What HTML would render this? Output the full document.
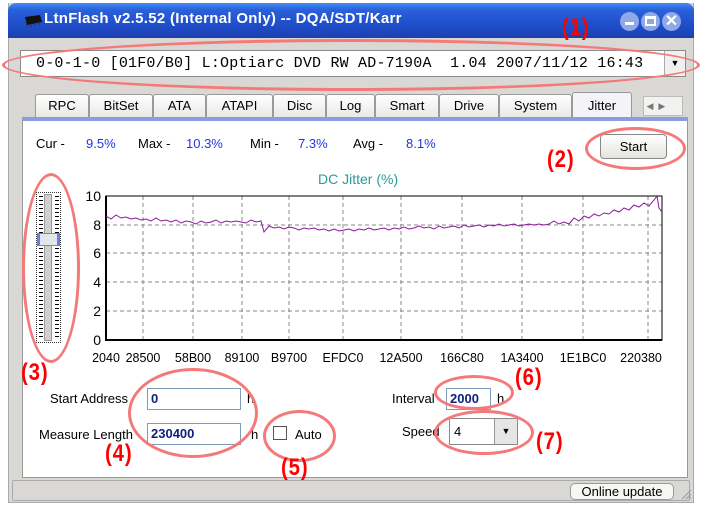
<!DOCTYPE html>
<html><head><meta charset="utf-8"><style>
*{margin:0;padding:0;box-sizing:border-box}
body{width:701px;height:506px;background:#fff;position:relative;overflow:hidden;font-family:"Liberation Sans",sans-serif;font-size:13px;color:#000}
.a{position:absolute}
.red{color:#f00;font-weight:bold;font-size:24px;position:absolute;letter-spacing:1px;transform:scaleX(0.85);transform-origin:left}
.ell{position:absolute;border:3px solid #f47a7a;border-radius:50%}
.tab{position:absolute;top:94px;height:24px;background:linear-gradient(#fff,#e8e8e4);border:1px solid #9a9a9a;border-bottom:none;border-radius:3px 3px 0 0;font-size:13px;text-align:center;line-height:22px}
.box{position:absolute;background:#fff;border:1px solid #7f9db9;color:#102080;font-weight:bold;font-size:13px;padding-left:3px;line-height:20px}
</style></head><body>
<div class="a" style="left:8px;top:3px;width:686px;height:500px;background:#d9d8d4;border:1px solid #aaa;border-top:none"></div>
<div class="a" style="left:8px;top:3px;width:686px;height:35px;background:linear-gradient(#3f8df8 0%,#2a60d8 20%,#1f4fcc 60%,#1d3fb0 100%);border-radius:8px 8px 0 0"></div>
<svg class="a" style="left:22px;top:14px" width="22" height="14"><path d="M3 3 L18 1 L20 8 L5 11 Z" fill="#111"/><path d="M5 11 L5 13 M9 10 L9 13 M13 10 L13 12 M17 9 L17 11" stroke="#333" stroke-width="1"/></svg>
<div class="a" style="left:44px;top:10px;color:#fff;font-weight:bold;font-size:15px;letter-spacing:0.3px">LtnFlash v2.5.52 (Internal Only) -- DQA/SDT/Karr</div>
<div class="a" style="left:620px;top:12px;width:19px;height:19px;border-radius:50%;background:#8ea8e8"><div class="a" style="left:5px;top:10px;width:9px;height:3px;background:#fff"></div></div>
<div class="a" style="left:641px;top:12px;width:19px;height:19px;border-radius:50%;background:#8ea8e8"><div class="a" style="left:4px;top:4px;width:11px;height:10px;border:2px solid #fff;border-top-width:3px"></div></div>
<div class="a" style="left:662px;top:12px;width:19px;height:19px;border-radius:50%;background:#8ea8e8;color:#fff;font-weight:bold;font-size:16px;text-align:center;line-height:19px">✕</div>
<div class="a" style="left:20px;top:50px;width:666px;height:27px;background:#fff;border:1px solid #8a8a8a"></div>
<div class="a" style="left:36px;top:55px;font-family:'Liberation Mono',monospace;font-size:15px;letter-spacing:0.2px;white-space:pre">0-0-1-0 [01F0/B0] L:Optiarc DVD RW AD-7190A  1.04 2007/11/12 16:43</div>
<div class="a" style="left:664px;top:51px;width:21px;height:25px;background:#f0f0f0;border-left:1px solid #aaa;font-size:9px;text-align:center;line-height:25px">▼</div>
<div class="tab" style="left:35px;width:54px">RPC</div>
<div class="tab" style="left:89px;width:64px">BitSet</div>
<div class="tab" style="left:153px;width:53px">ATA</div>
<div class="tab" style="left:206px;width:67px">ATAPI</div>
<div class="tab" style="left:273px;width:53px">Disc</div>
<div class="tab" style="left:326px;width:49px">Log</div>
<div class="tab" style="left:375px;width:64px">Smart</div>
<div class="tab" style="left:439px;width:60px">Drive</div>
<div class="tab" style="left:499px;width:73px">System</div>
<div class="tab" style="left:572px;top:92px;height:26px;width:60px;background:#f4f4f8;color:#000;line-height:26px">Jitter</div>
<div class="a" style="left:643px;top:96px;width:40px;height:20px;border:1px solid #bbb;background:#f2f2f0;font-size:9px;color:#777;line-height:18px">&nbsp;◀ &nbsp;▶</div>
<div class="a" style="left:22px;top:117px;width:666px;height:361px;background:#fff;border:1px solid #9a9a9a;border-top:4px solid #8c9ce0"></div>
<div class="a" style="left:36px;top:136px">Cur -</div><div class="a" style="left:86px;top:136px;color:#2236e0">9.5%</div>
<div class="a" style="left:138px;top:136px">Max -</div><div class="a" style="left:186px;top:136px;color:#2236e0">10.3%</div>
<div class="a" style="left:250px;top:136px">Min -</div><div class="a" style="left:298px;top:136px;color:#2236e0">7.3%</div>
<div class="a" style="left:353px;top:136px">Avg -</div><div class="a" style="left:406px;top:136px;color:#2236e0">8.1%</div>
<div class="a" style="left:600px;top:134px;width:67px;height:25px;border:1px solid #888;border-radius:4px;background:linear-gradient(#fff,#e4e4e0);text-align:center;line-height:23px">Start</div>
<div class="a" style="left:318px;top:171px;color:#2a9a9a;font-size:14px">DC Jitter (%)</div>
<div class="a" style="left:36px;top:192px;width:25px;height:151px;border:1px dotted #333"></div>
<div class="a" style="left:39px;top:196px;width:4px;height:143px;background:repeating-linear-gradient(#000 0 1px,transparent 1px 4px)"></div>
<div class="a" style="left:55px;top:196px;width:4px;height:143px;background:repeating-linear-gradient(#000 0 1px,transparent 1px 4px)"></div>
<div class="a" style="left:44px;top:194px;width:8px;height:147px;background:#d0d0d0;border:1px solid #999"></div>
<div class="a" style="left:37px;top:233px;width:23px;height:13px;background:#e4e4ea;border:1px solid #888;border-left:3px solid #6a7ce8;border-right:3px solid #6a7ce8"></div>
<svg class="a" style="left:0;top:0" width="701" height="506">
<g stroke="#888" stroke-dasharray="4,3" stroke-width="1">
<line x1="106" y1="225" x2="662" y2="225"/><line x1="106" y1="253" x2="662" y2="253"/><line x1="106" y1="282" x2="662" y2="282"/><line x1="106" y1="311" x2="662" y2="311"/>
<line x1="143" y1="196" x2="143" y2="340"/><line x1="193" y1="196" x2="193" y2="340"/><line x1="242" y1="196" x2="242" y2="340"/><line x1="289" y1="196" x2="289" y2="340"/><line x1="343" y1="196" x2="343" y2="340"/><line x1="401" y1="196" x2="401" y2="340"/><line x1="462" y1="196" x2="462" y2="340"/><line x1="522" y1="196" x2="522" y2="340"/><line x1="583" y1="196" x2="583" y2="340"/><line x1="648" y1="196" x2="648" y2="340"/>
</g>
<rect x="106" y="196" width="556" height="144" fill="none" stroke="#000"/>
<line x1="106" y1="196" x2="106" y2="341" stroke="#000" stroke-width="2"/>
<line x1="105" y1="340" x2="662" y2="340" stroke="#000" stroke-width="2"/>
<polyline fill="none" stroke="#8a1a9a" stroke-width="1" points="106,216 111,219 116,215 121,218 126,217 131,219 136,218 141,220 146,219 151,221 156,218 161,221 166,220 171,222 176,220 181,223 186,221 191,222 196,224 201,221 206,223 211,222 216,220 221,223 226,221 231,222 236,221 241,222 246,223 251,220 256,222 261,221 264,232 269,226 274,228 279,227 284,229 289,227 294,228 299,230 304,228 309,229 314,228 319,230 324,229 329,231 334,229 339,231 344,230 349,229 354,231 359,229 364,230 369,228 374,230 379,229 384,228 389,230 394,228 399,229 404,227 409,229 414,228 419,226 424,228 429,227 434,229 439,226 444,228 449,227 454,226 459,228 464,225 469,227 474,226 479,225 484,227 489,225 494,226 499,224 504,226 509,225 514,224 519,226 524,225 529,224 534,225 539,224 544,225 549,224 554,221 559,224 564,222 569,224 574,218 579,221 584,216 589,218 594,214 599,216 604,213 609,214 614,210 619,212 624,208 629,210 634,205 639,207 644,203 649,206 654,200 657,196 659,208 662,212"/>
<g font-family="Liberation Sans" font-size="14" text-anchor="end">
<text x="101" y="201">10</text><text x="101" y="230">8</text><text x="101" y="258">6</text><text x="101" y="287">4</text><text x="101" y="316">2</text><text x="101" y="345">0</text></g>
<g font-family="Liberation Sans" font-size="12.5" text-anchor="middle">
<text x="106" y="362">2040</text><text x="143" y="362">28500</text><text x="193" y="362">58B00</text><text x="242" y="362">89100</text><text x="289" y="362">B9700</text><text x="343" y="362">EFDC0</text><text x="401" y="362">12A500</text><text x="462" y="362">166C80</text><text x="522" y="362">1A3400</text><text x="583" y="362">1E1BC0</text><text x="641" y="362">220380</text></g>
</svg>
<div class="a" style="left:50px;top:391px">Start Address</div>
<div class="box" style="left:147px;top:388px;width:94px;height:22px">0</div>
<div class="a" style="left:247px;top:391px">h</div>
<div class="a" style="left:39px;top:427px">Measure Length</div>
<div class="box" style="left:147px;top:423px;width:94px;height:22px">230400</div>
<div class="a" style="left:251px;top:427px">h</div>
<div class="a" style="left:273px;top:426px;width:14px;height:14px;border:1px solid #555;background:#fff"></div>
<div class="a" style="left:295px;top:427px">Auto</div>
<div class="a" style="left:392px;top:391px">Interval</div>
<div class="box" style="left:446px;top:388px;width:45px;height:22px">2000</div>
<div class="a" style="left:497px;top:391px">h</div>
<div class="a" style="left:402px;top:424px">Speed</div>
<div class="a" style="left:449px;top:418px;width:69px;height:27px;background:#fff;border:1px solid #888;padding:5px 4px;font-size:13px">4</div>
<div class="a" style="left:494px;top:419px;width:23px;height:25px;background:#e6e6e6;border-left:1px solid #999;font-size:9px;text-align:center;line-height:25px">▼</div>
<div class="a" style="left:12px;top:480px;width:678px;height:21px;border:1px solid #aaa;border-radius:2px"></div>
<div class="a" style="left:570px;top:483px;width:104px;height:17px;border:1px solid #999;border-radius:5px;background:#f6f6f4;text-align:center;line-height:16px;font-size:13px">Online update</div>
<svg class="a" style="left:680px;top:486px" width="12" height="14"><path d="M2 13 L11 4 M6 13 L11 8 M9 13 L11 11" stroke="#999"/></svg>
<div class="ell" style="left:2px;top:39px;width:698px;height:52px"></div>
<div class="red" style="left:562px;top:14px">(1)</div>
<div class="ell" style="left:585px;top:127px;width:101px;height:43px"></div>
<div class="red" style="left:547px;top:146px">(2)</div>
<div class="ell" style="left:22px;top:173px;width:58px;height:190px"></div>
<div class="red" style="left:21px;top:359px">(3)</div>
<div class="ell" style="left:128px;top:368px;width:130px;height:90px"></div>
<div class="red" style="left:105px;top:440px">(4)</div>
<div class="ell" style="left:263px;top:410px;width:73px;height:52px"></div>
<div class="red" style="left:281px;top:454px">(5)</div>
<div class="ell" style="left:434px;top:375px;width:80px;height:35px"></div>
<div class="red" style="left:515px;top:364px">(6)</div>
<div class="ell" style="left:434px;top:410px;width:100px;height:45px"></div>
<div class="red" style="left:536px;top:428px">(7)</div>
</body></html>
